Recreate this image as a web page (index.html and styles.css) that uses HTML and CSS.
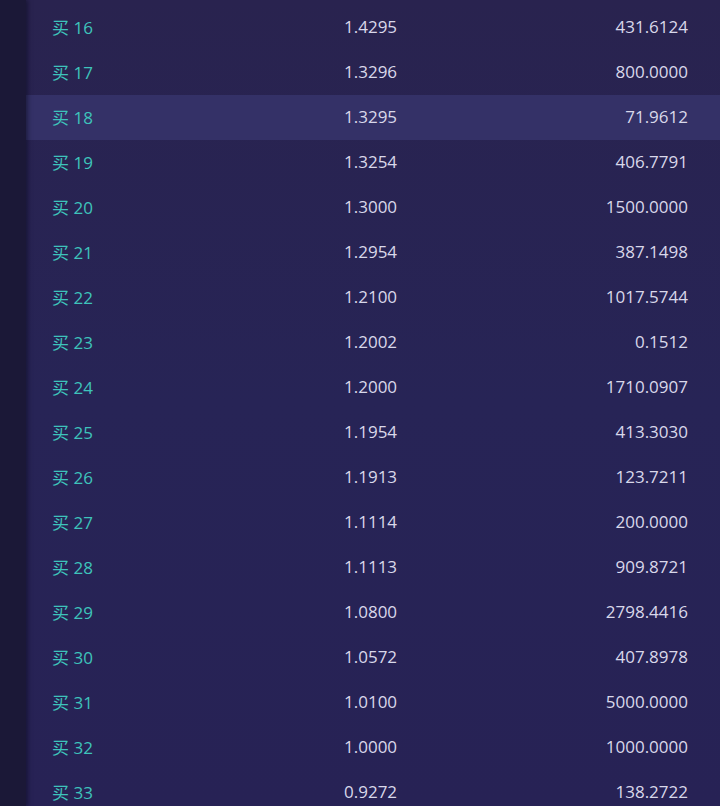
FILE: index.html
```html
<!DOCTYPE html>
<html lang="zh">
<head>
<meta charset="utf-8">
<link rel="stylesheet" href="styles.css">
</head>
<body>
<div class="app">
  <aside class="side"></aside>
  <main class="panel">
    <div class="row"><span class="lbl">买 16</span><span class="price">1.4295</span><span class="amt">431.6124</span></div>
    <div class="row"><span class="lbl">买 17</span><span class="price">1.3296</span><span class="amt">800.0000</span></div>
    <div class="row active"><span class="lbl">买 18</span><span class="price">1.3295</span><span class="amt">71.9612</span></div>
    <div class="row"><span class="lbl">买 19</span><span class="price">1.3254</span><span class="amt">406.7791</span></div>
    <div class="row"><span class="lbl">买 20</span><span class="price">1.3000</span><span class="amt">1500.0000</span></div>
    <div class="row"><span class="lbl">买 21</span><span class="price">1.2954</span><span class="amt">387.1498</span></div>
    <div class="row"><span class="lbl">买 22</span><span class="price">1.2100</span><span class="amt">1017.5744</span></div>
    <div class="row"><span class="lbl">买 23</span><span class="price">1.2002</span><span class="amt">0.1512</span></div>
    <div class="row"><span class="lbl">买 24</span><span class="price">1.2000</span><span class="amt">1710.0907</span></div>
    <div class="row"><span class="lbl">买 25</span><span class="price">1.1954</span><span class="amt">413.3030</span></div>
    <div class="row"><span class="lbl">买 26</span><span class="price">1.1913</span><span class="amt">123.7211</span></div>
    <div class="row"><span class="lbl">买 27</span><span class="price">1.1114</span><span class="amt">200.0000</span></div>
    <div class="row"><span class="lbl">买 28</span><span class="price">1.1113</span><span class="amt">909.8721</span></div>
    <div class="row"><span class="lbl">买 29</span><span class="price">1.0800</span><span class="amt">2798.4416</span></div>
    <div class="row"><span class="lbl">买 30</span><span class="price">1.0572</span><span class="amt">407.8978</span></div>
    <div class="row"><span class="lbl">买 31</span><span class="price">1.0100</span><span class="amt">5000.0000</span></div>
    <div class="row"><span class="lbl">买 32</span><span class="price">1.0000</span><span class="amt">1000.0000</span></div>
    <div class="row"><span class="lbl">买 33</span><span class="price">0.9272</span><span class="amt">138.2722</span></div>
  </main>
</div>
</body>
</html>
```
FILE: styles.css
```css
html, body {
  margin: 0;
  padding: 0;
  height: 100%;
  overflow: hidden;
  background: #1b1837;
}
.app {
  display: flex;
  height: 806px;
  font-family: "Open Sans", "Noto Sans CJK SC", sans-serif;
  font-size: 17px;
}
.side {
  width: 26px;
  flex: none;
  background: #1b1837;
  box-shadow: 2px 0 4px rgba(10, 8, 30, 0.5);
  z-index: 1;
}
.panel {
  flex: 1;
  padding-top: 5px;
  background: linear-gradient(180deg, #29234f 0%, #272456 50%, #272255 100%);
}
.row {
  box-sizing: border-box;
  display: grid;
  grid-template-columns: 292px 1fr auto;
  align-items: center;
  height: 45px;
  padding: 0 32px 2px 26px;
}
.row.active {
  background: #343167;
}
.lbl {
  color: #3ec3bb;
}
.price {
  color: #d9d8ea;
}
.amt {
  color: #d9d8ea;
  text-align: right;
}
```
